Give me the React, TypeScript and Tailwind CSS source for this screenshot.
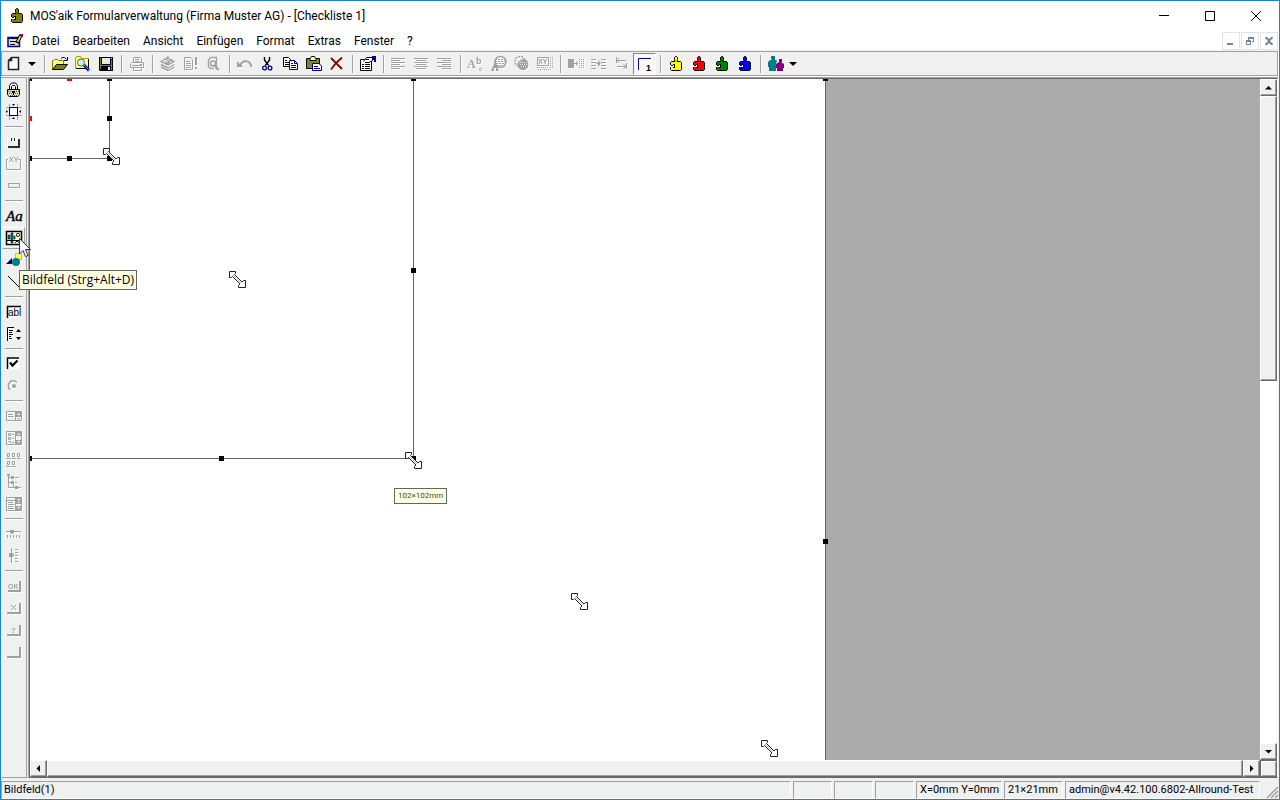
import type { ReactNode } from "react";

const GRAY = "#a0a0a0";

const puzzle = (fill: string) => (
  <>
    <path
      d="M6.5 1.5L7.5 .5H8.5L9.5 1.5V3.5L9 5.5H12.5L13.5 6.5V13.5L12.5 14.5H3.5L2.5 13.5V6.5L3.5 5.5H7L6.5 3.5Z"
      fill={fill}
      stroke="#000"
    />
    <path d="M2 9h3v-1h2v4H5v-1H2z" fill="#000" />
    <path d="M1 9h2v1h2v-1h1v2H1z" fill="#fff" />
  </>
);

const lines = (d: string) => <path d={d} stroke={GRAY} fill="none" />;

const icons: Record<string, ReactNode> = {
  page: <path d="M4.5 1.5H11.5V13.5H1.5V4.5ZM4.5 1.5V4.5H1.5" fill="#fff" stroke="#222" strokeWidth="1.5" />,
  open: (
    <>
      <path d="M.5 13V4.5H1.5L2.5 3.5H5.5L6.5 4.5H11.5V8" fill="#ffff80" stroke="#808000" />
      <path d="M.5 13.5L4.5 8.5H15.5L11.5 13.5Z" fill="#808000" stroke="#000" />
      <path d="M9 2.5L10.5 1.5H12.5L14.5 3.5M15.5 1V4.5H12" fill="none" stroke="#000" />
    </>
  ),
  preview: (
    <>
      <path d="M.5 2.5L1.5 .5H5.5L6.5 2.5H13.5V12.5H.5Z" fill="#ffff80" stroke="#a0a000" />
      <path d="M13.5 3V13M1 12.5H11" stroke="#000" />
      <circle cx="6" cy="6.5" r="3.5" fill="#c8f4ff" stroke="#606060" />
      <path d="M9 9L14 14.5" stroke="#000080" strokeWidth="3" />
      <path d="M9 9L14 14" stroke="#00d0ff" />
    </>
  ),
  save: (
    <>
      <path d="M1 1H15V15H2L1 14Z" fill="#000" />
      <path d="M2 2H3V9H13V4H14V14H13V10H3V13H2Z" fill="#808000" />
      <path d="M4 2H12V8H4ZM10 11H12V14H10Z" fill="#e8e8e8" />
      <path d="M13 2h1v1h-1z" fill="#fff" />
    </>
  ),
  print: (
    <>
      {lines("M4.5 6V1.5H11.5L12.5 2.5V6M6 3.5H10M6 5.5H10M2.5 6.5H14.5V11.5H1.5V7.5M4.5 11V14.5H12.5V11M3 9.5H13")}
      <path d="M11 8h2v1h-2zM3 11h10v1H3z" fill={GRAY} />
    </>
  ),
  layers: (
    <path
      d="M1 5.5L7 2L14 5.5L8 9ZM1 8.5L8 12L14.5 8.5M1 11L8 14.5L14.5 11M5 5.5L8 7.5L12 3M5 3L10 6M8 0V3"
      stroke={GRAY}
      strokeWidth="1.4"
      fill="none"
    />
  ),
  pageAlert: (
    <>
      {lines("M1.5 1.5H7.5L9.5 3.5V13.5H1.5ZM3 5.5H7M3 7.5H8M3 9.5H8M3 11.5H8")}
      <path d="M12 1h2v8h-2zM12 11h2v2h-2z" fill={GRAY} />
    </>
  ),
  pageFind: (
    <>
      <path d="M4.5 1.5H10.5V13.5M4.5 1.5L2.5 4.5V10.5L4.5 12.5H8" fill="none" stroke={GRAY} strokeWidth="1.5" />
      <circle cx="7" cy="7.5" r="2.5" fill="none" stroke={GRAY} strokeWidth="1.5" />
      <path d="M8.5 9.5L13 14" stroke={GRAY} strokeWidth="2" />
    </>
  ),
  undo: (
    <>
      <path d="M3 10C5 4 13 3 14.5 11" fill="none" stroke={GRAY} strokeWidth="2" />
      <path d="M0 5V11H6Z" fill={GRAY} />
    </>
  ),
  cut: (
    <>
      <path d="M4.5 1V4L8 9M9.5 1V4L6 9" fill="none" stroke="#000" strokeWidth="1.4" />
      <circle cx="4.5" cy="12" r="1.9" fill="none" stroke="#000080" strokeWidth="1.3" />
      <circle cx="10" cy="12" r="1.9" fill="none" stroke="#000080" strokeWidth="1.3" />
      <path d="M6 8L5 10M8 8L9 10" stroke="#000080" />
    </>
  ),
  copy: (
    <>
      <path d="M.5 1.5H5.5L7.5 3.5V10.5H.5Z" fill="#fff" stroke="#000" />
      <path d="M2 4.5H4M2 6.5H6M2 8.5H6" stroke="#000" />
      <path d="M6.5 4.5H11.5L14.5 7.5V13.5H6.5Z" fill="#fff" stroke="#000080" />
      <path d="M8 7.5H10M8 9.5H13M8 11.5H13M11.5 5V7.5H14" stroke="#000080" fill="none" />
    </>
  ),
  paste: (
    <>
      <path d="M.5 2.5H13.5V12.5H.5Z" fill="#808040" stroke="#000" />
      <path d="M4 2.5L5.5 .5H8.5L10 2.5V4.5H4Z" fill="#ffff80" stroke="#000" />
      <path d="M6.5 7.5H13L15.5 10V14.5H6.5Z" fill="#fff" stroke="#000080" />
      <path d="M8 10.5H12M8 12.5H14" stroke="#000080" />
    </>
  ),
  remove: <path d="M2 2L13 13M13 1.5L7 7L2 13.5" stroke="#800000" strokeWidth="1.8" fill="none" />,
  props: (
    <>
      <path d="M.5 3.5H11.5V14.5H.5Z" fill="#fff" stroke="#000" />
      <path d="M2 8.5H4M5 8.5H10M2 10.5H4M5 10.5H10M2 12.5H4M5 12.5H10" stroke="#000" />
      <path d="M3.5 5.5L6.5 1.5H12.5V4.5L9 6.5H5" fill="#fff" stroke="#000" />
      <path d="M6 3.5H9" stroke="#000" />
      <path d="M12 0H16V6H14V4H12Z" fill="#000080" />
    </>
  ),
  left: lines("M0 2.5H14M0 4.5H9M0 6.5H14M0 8.5H9M0 10.5H14M0 12.5H9"),
  center: lines("M0 2.5H14M2 4.5H12M0 6.5H14M2 8.5H12M0 10.5H14M2 12.5H12"),
  right: lines("M0 2.5H14M5 4.5H14M0 6.5H14M5 8.5H14M0 10.5H14M5 12.5H14"),
  font: (
    <>
      <text x="-1" y="12" fontFamily="Liberation Serif" fontWeight="bold" fontSize="12" fill={GRAY}>
        A
      </text>
      <text x="8" y="8" fontFamily="Liberation Sans" fontWeight="bold" fontSize="9" fill={GRAY}>
        b
      </text>
      <text x="11" y="15" fontFamily="Liberation Sans" fontWeight="bold" fontSize="6" fill={GRAY}>
        c
      </text>
    </>
  ),
  fontColor: (
    <>
      <circle cx="9.5" cy="6" r="5.5" fill="none" stroke={GRAY} strokeWidth="1.5" />
      <path d="M4 3.5H15M4 5.5H15M5 7.5H15M6 9.5H14" stroke={GRAY} strokeDasharray="2 1" />
      <path d="M0 15L4 6L8 15H5V12H3V15Z" fill={GRAY} />
    </>
  ),
  fillColor: (
    <>
      <circle cx="6" cy="5.5" r="5" fill="none" stroke={GRAY} strokeWidth="1.5" strokeDasharray="2 1" />
      <circle cx="9" cy="8.5" r="5.5" fill={GRAY} />
      <path d="M6 6.5H13M6 8.5H14M7 10.5H13M3 4.5H8M3 6.5H6" stroke="#e8e8e8" strokeDasharray="1 1" />
    </>
  ),
  frame: (
    <>
      {lines("M.5 1.5H11.5V9.5H.5Z")}
      <path d="M13.5 1V13.5H0M15.5 1V13M0 11.5H12" stroke={GRAY} fill="none" strokeDasharray="1 1" />
      <text x="1" y="8" fontFamily="Liberation Sans" fontWeight="bold" fontSize="7" fill={GRAY}>
        XY
      </text>
    </>
  ),
  toRight: (
    <>
      <path d="M0 3H6V12H0ZM8 5L10 7.5L8 10ZM6 7H9V8H6Z" fill={GRAY} />
      <path d="M11.5 3V12M13.5 3V12M15.5 3V12" stroke={GRAY} strokeDasharray="1 1" />
    </>
  ),
  between: (
    <>
      {lines("M0 3.5H5M0 6.5H5M0 9.5H5M0 12.5H5M10 3.5H15M10 6.5H15M10 9.5H15M10 12.5H15M5 7.5H8")}
      <path d="M7 4L10 7.5L7 11Z" fill={GRAY} />
    </>
  ),
  tabOrder: lines("M2.5 1V7M3 4.5H12M5.5 2L3 4.5L5.5 7M12.5 7V13M3 10.5H12M9.5 8L12 10.5L9.5 13"),
  corner: (
    <>
      <path d="M1.5 14V2.5H14" stroke="#000080" fill="none" />
      <text x="9" y="15" fontFamily="Liberation Sans" fontWeight="bold" fontSize="9" fill="#000">
        1
      </text>
    </>
  ),
  yellow: puzzle("#ffff00"),
  red: puzzle("#ff0000"),
  green: puzzle("#008000"),
  blue: puzzle("#0000ff"),
  olive: puzzle("#808000"),
  people: (
    <>
      <path d="M3 0H7V4H9L8 8V15H1V11H0V6L2 4H4L3 3Z" fill="#008080" />
      <path d="M11 3H14V6H13L16 8V12H15V15H9V12H8V8L11 6Z" fill="#800080" />
    </>
  ),
  lock: (
    <>
      <path d="M3.5 7V3.5L5.5 1H9.5L11.5 3.5V7" fill="none" stroke="#000" />
      <path d="M5.5 7V4.5L6.5 3.5H8.5L9.5 4.5V7" fill="none" stroke="#000" />
      <path d="M1.5 7.5H13.5V12.5L12 14.5H3L1.5 12.5Z" fill="#d8d8b8" stroke="#000" />
      <path d="M2 9.5H13M3 11.5H13M2 13.5H13" stroke="#606040" strokeDasharray="1 1" />
      <path d="M6 9h3v2H8v2H7v-2H6z" fill="#000" />
    </>
  ),
  snap: (
    <>
      <path d="M3.5 0V16M11.5 0V16M0 3.5H16M0 11.5H16" stroke="#a0a0a0" />
      <path d="M3.5 3.5H11.5V11.5H3.5Z" fill="#fff" stroke="#000" />
      <path d="M6 0H9L7.5 2ZM6 15H9L7.5 13ZM0 6V9L2 7.5ZM15 6V9L13 7.5Z" fill="#000080" />
    </>
  ),
  raised: (
    <>
      <path d="M1 4H5V6H8V4H12V13H1Z" fill="#fff" />
      <path d="M5 4H6V7H5ZM8 4H9V7H8Z" fill="#202020" />
      <path d="M2 12H12V5H14V14H2Z" fill="#303030" />
      <path d="M2 7H12V12H2Z" fill="#f0f0f0" />
    </>
  ),
  group: (
    <>
      {lines("M2 3.5H.5V13.5H14.5V3.5H12")}
      <text x="3" y="6" fontFamily="Liberation Sans" fontSize="7" fill="#808080">
        XY
      </text>
    </>
  ),
  bar: <path d="M2.5 5.5H13.5V9.5H2.5Z" fill="#f0f0f0" stroke={GRAY} />,
  label: (
    <text
      x="0"
      y="13"
      fontFamily="Liberation Serif"
      fontStyle="italic"
      fontSize="15"
      fill="#000"
      stroke="#000"
      strokeWidth=".4"
    >
      Aa
    </text>
  ),
  image: (
    <>
      <path d="M.5 1.5H15.5V14.5H.5Z" fill="#fff" stroke="#000" strokeWidth="1.5" />
      <path d="M5 3H7V13H5ZM2 5H4V9H2ZM8 6H9V9H8Z" fill="#008080" stroke="#000" strokeWidth=".6" />
      <path d="M1 10.5H15M9 13L11 11L14 13" fill="none" stroke="#000" />
      <circle cx="12" cy="5" r="1.7" fill="#ff0" stroke="#000" strokeWidth=".8" />
    </>
  ),
  shapes: (
    <>
      <path d="M9.5 1.5H15.5V7.5H9.5Z" fill="#ffff60" stroke="#e0c000" />
      <path d="M0 12L6 6V12Z" fill="#000080" />
      <circle cx="10" cy="10" r="4" fill="#008080" />
    </>
  ),
  line: <path d="M2 2L13 13" stroke="#000" />,
  textbox: (
    <>
      <path d="M1 2H15V14H1Z" fill="#fff" />
      <path d="M1.5 14V2.5H15" stroke="#000" strokeWidth="1.5" fill="none" />
      <text x="2" y="12" fontFamily="Liberation Sans" fontSize="10" fill="#000">
        abl
      </text>
    </>
  ),
  spin: (
    <>
      <path d="M1 1H8V15H1Z" fill="#fff" />
      <path d="M1.5 15V1.5H8M3 4.5H7M3 6.5H6M3 8.5H7M3 10.5H5M3 12.5H6" stroke="#000" fill="none" />
      <path d="M10 6L12.5 3L15 6ZM10 11L12.5 14L15 11Z" fill="#000" />
    </>
  ),
  check: (
    <>
      <path d="M2 2H13V13H2Z" fill="#fff" />
      <path d="M1.5 13V2H13" stroke="#000" strokeWidth="1.5" fill="none" />
      <path d="M4 6.5L6.5 9.5L11.5 4.5" stroke="#000" strokeWidth="2.2" fill="none" />
    </>
  ),
  radio: (
    <>
      <path d="M4 12L2.5 9.5V6L5 3H9L11 4.5" stroke={GRAY} strokeWidth="1.5" fill="none" />
      <circle cx="8" cy="8" r="2" fill={GRAY} />
    </>
  ),
  combo: (
    <>
      {lines("M.5 3.5H15.5V12.5H.5ZM9.5 4V12M2 6.5H7M2 8.5H8M10 8.5H15")}
      <path d="M10 4H15V8H10ZM11 10h3l-1 2z" fill={GRAY} />
      <path d="M11 7h3l-1-2z" fill="#fff" />
    </>
  ),
  list: (
    <>
      {lines(
        "M.5 1.5H15.5V14.5H.5ZM9.5 2V14M2.5 3.5H4.5V5.5H2.5ZM2.5 7.5H4.5V9.5H2.5ZM2.5 11.5H4.5V13.5M6 4.5H8M6 8.5H8M6 12.5H8",
      )}
      <path d="M10 2H15V6H10ZM10 10H15V14H10Z" fill={GRAY} />
      <path d="M11 5h3l-1-2zM11 11h3l-1 2z" fill="#fff" />
    </>
  ),
  iconsView: lines(
    "M1.5 1.5H3.5V4.5H1.5ZM6.5 1.5H8.5V4.5H6.5ZM11.5 1.5H13.5V4.5H11.5ZM0 6.5H5M6 6.5H10M11 6.5H15M1.5 9.5H3.5V12.5H1.5ZM6.5 9.5H8.5V12.5H6.5ZM0 14.5H5M6 14.5H10",
  ),
  tree: (
    <>
      {lines("M2.5 0V13.5H7M3 3.5H6M3 8.5H6M9 3.5H13M9 8.5H11M7.5 9V13.5H9M12 13.5H15")}
      <path d="M5 2h3v3H5zM5 7h3v3H5zM9 12h3v3H9zM1 0h3v2H1z" fill={GRAY} />
    </>
  ),
  table: (
    <>
      {lines("M.5 1.5H15.5V14.5H.5ZM0 4.5H15M9.5 1V14M2 6.5H7M2 8.5H8M2 10.5H7M2 12.5H8")}
      <path d="M10 2H15V8H10ZM10 10H15V14H10Z" fill={GRAY} />
      <path d="M11 3h3l-1 2zM11 7h3l-1-1zM11 11h3l-1 2z" fill="#fff" />
    </>
  ),
  sliderH: (
    <>
      {lines("M0 5.5H15M1.5 9V12M4.5 9V12M7.5 9V12M10.5 9V12M13.5 9V12")}
      <path d="M4 4H8V7L6 8L4 7Z" fill={GRAY} />
    </>
  ),
  sliderV: (
    <>
      {lines("M5.5 0V15M9 1.5H12M9 4.5H12M9 7.5H12M9 10.5H12M9 13.5H12")}
      <path d="M3 5H7L8 7L7 9H3Z" fill={GRAY} />
    </>
  ),
  ok: (
    <>
      <path d="M2 13H14V3" stroke={GRAY} strokeWidth="2" fill="none" />
      <text x="2" y="11" fontFamily="Liberation Sans" fontWeight="bold" fontSize="7" fill={GRAY}>
        OK
      </text>
    </>
  ),
  cancel: (
    <>
      <path d="M1 13H14V3" stroke={GRAY} strokeWidth="2" fill="none" />
      {lines("M5 5L10 10M10 5L5 10")}
    </>
  ),
  help: (
    <>
      <path d="M1 13H14V3" stroke={GRAY} strokeWidth="2" fill="none" />
      <text x="5" y="11" fontFamily="Liberation Sans" fontWeight="bold" fontSize="8" fill={GRAY}>
        ?
      </text>
    </>
  ),
  blank: <path d="M1 13H14V3" stroke={GRAY} strokeWidth="2" fill="none" />,
};

type Tool = { icon: string; label: string; state?: "off" | "on" | "hover" };

const off = (icon: string, label: string): Tool => ({ icon, label, state: "off" });

const toolbar: Tool[][] = [
  [
    { icon: "open", label: "Öffnen" },
    { icon: "preview", label: "Seitenansicht" },
    { icon: "save", label: "Speichern" },
  ],
  [off("print", "Drucken")],
  [off("layers", "Stapel"), off("pageAlert", "Prüfen"), off("pageFind", "Suchen")],
  [
    off("undo", "Rückgängig"),
    { icon: "cut", label: "Ausschneiden" },
    { icon: "copy", label: "Kopieren" },
    { icon: "paste", label: "Einfügen" },
    { icon: "remove", label: "Löschen" },
  ],
  [{ icon: "props", label: "Eigenschaften" }],
  [off("left", "Linksbündig"), off("center", "Zentriert"), off("right", "Rechtsbündig")],
  [
    off("font", "Schriftart"),
    off("fontColor", "Schriftfarbe"),
    off("fillColor", "Füllfarbe"),
    off("frame", "Rahmen"),
  ],
  [
    off("toRight", "Verschieben"),
    off("between", "Verteilen"),
    off("tabOrder", "Reihenfolge"),
    { icon: "corner", label: "Ebene 1", state: "on" },
  ],
  [
    { icon: "yellow", label: "Baustein gelb" },
    { icon: "red", label: "Baustein rot" },
    { icon: "green", label: "Baustein grün" },
    { icon: "blue", label: "Baustein blau" },
  ],
];

const rail: Tool[][] = [
  [
    { icon: "lock", label: "Sperren" },
    { icon: "snap", label: "Raster" },
  ],
  [{ icon: "raised", label: "Register" }, off("group", "Gruppe"), off("bar", "Leiste")],
  [
    { icon: "label", label: "Textfeld" },
    { icon: "image", label: "Bildfeld", state: "hover" },
    { icon: "shapes", label: "Form" },
    { icon: "line", label: "Linie" },
  ],
  [
    { icon: "textbox", label: "Eingabefeld" },
    { icon: "spin", label: "Drehfeld" },
  ],
  [{ icon: "check", label: "Kontrollkästchen" }, off("radio", "Optionsfeld")],
  [
    off("combo", "Kombinationsfeld"),
    off("list", "Listenfeld"),
    off("iconsView", "Symbolansicht"),
    off("tree", "Baumansicht"),
    off("table", "Tabelle"),
  ],
  [off("sliderH", "Schieber waagerecht"), off("sliderV", "Schieber senkrecht")],
  [off("ok", "OK"), off("cancel", "Abbrechen"), off("help", "Hilfe"), off("blank", "Schaltfläche")],
];

const stateClass = {
  off: "border-transparent",
  on: "border-t-[#808080] border-l-[#808080] border-r-white border-b-white bg-[#f8f8f8]",
  hover: "border-t-white border-l-white border-r-[#a0a0a0] border-b-[#a0a0a0]",
};

const Icon = ({ name, disabled = false }: { name: string; disabled?: boolean }) => (
  <svg
    viewBox="0 0 16 16"
    aria-hidden="true"
    className={`size-4 shrink-0 overflow-visible ${disabled ? "drop-shadow-[1px_1px_0_#fff]" : ""}`}
  >
    {icons[name]}
  </svg>
);

const ToolButton = ({ icon, label, state }: Tool) => (
  <button
    type="button"
    aria-label={label}
    disabled={state === "off"}
    className={`flex h-[22px] w-[23px] shrink-0 border pl-[3px] pt-0.5 ${stateClass[state ?? "off"]}`}
  >
    <Icon name={icon} disabled={state === "off"} />
  </button>
);

const BarDivider = () => (
  <div className="w-2 shrink-0 py-0.5 pl-1">
    <div className="h-full w-0.5 border-l border-[#a0a0a0] bg-white" />
  </div>
);

const DropArrow = () => (
  <button type="button" aria-label="Auswahl öffnen" className="flex w-3.5 items-center pl-0.5">
    <svg viewBox="0 0 8 4" className="h-1 w-2" aria-hidden="true">
      <path d="M0 0H8L4 4Z" />
    </svg>
  </button>
);

const captionControls = [
  { label: "Minimieren", d: "M0 4.5H10" },
  { label: "Maximieren", d: "M.5.5H9.5V9.5H.5Z" },
  { label: "Schließen", d: "M0 0L10 10M10 0L0 10" },
];

const TitleBar = () => (
  <header className="flex h-[30px] shrink-0 items-center pl-2">
    <Icon name="olive" />
    <h1 className="flex-1 pl-[5px] text-[12px]">MOS'aik Formularverwaltung (Firma Muster AG) - [Checkliste 1]</h1>
    {captionControls.map(({ label, d }) => (
      <button
        key={label}
        type="button"
        aria-label={label}
        className="flex h-full w-[46px] items-center justify-center"
      >
        <svg viewBox="0 0 10 10" className="size-2.5" aria-hidden="true">
          <path d={d} fill="none" stroke="#000" />
        </svg>
      </button>
    ))}
  </header>
);

const menus = ["Datei", "Bearbeiten", "Ansicht", "Einfügen", "Format", "Extras", "Fenster", "?"];

const childControls = [
  { label: "Formular minimieren", d: "M4 10H10V12H4Z" },
  { label: "Formular wiederherstellen", d: "M6 4H12V9H10V8H11V6H7V7H6ZM4 7H9V12H4ZM5 9V11H8V9Z" },
  { label: "Formular schließen", d: "M4 4H6L8 6L10 4H12V5L9 8L12 11V12H10L8 10L6 12H4V11L7 8L4 5Z" },
];

const MenuBar = () => (
  <nav className="flex h-5 shrink-0 items-center border-b border-[#f0f0f0] pl-1.5">
    <svg viewBox="0 0 16 14" className="h-3.5 w-4" aria-hidden="true">
      <path d="M1 3.5H12.5V12.5H1Z" fill="#d8d8d8" stroke="#000080" strokeWidth="1.5" />
      <path d="M1 3H12V5H1Z" fill="#000080" />
      <path d="M3 7.5H9M3 10.5H8" stroke="#000" />
      <path d="M10 9L14 1" stroke="#000" strokeWidth="3.5" />
      <path d="M10.5 8L13.5 2" stroke="#ff0" strokeWidth="1.5" />
      <path d="M13 0h3v3h-2z" fill="#800080" />
    </svg>
    <div className="flex flex-1 pl-0.5 text-[12px]">
      {menus.map((name) => (
        <button key={name} type="button" className="pl-[7px] pr-1.5 leading-5">
          {name}
        </button>
      ))}
    </div>
    <div className="flex gap-px pr-px">
      {childControls.map(({ label, d }) => (
        <button key={label} type="button" aria-label={label} className="size-[18px] border border-[#e3e3e3]">
          <svg viewBox="0 0 16 16" className="size-4" aria-hidden="true">
            <path d={d} fill="#75869a" fillRule="evenodd" />
          </svg>
        </button>
      ))}
    </div>
  </nav>
);

const Toolbar = () => (
  <div className="mb-px mr-px flex h-[25px] shrink-0 overflow-hidden border border-[#a0a0a0] bg-[#f0f0f0] pl-px pt-px">
    <ToolButton icon="page" label="Neu" />
    <DropArrow />
    {toolbar.map((group) => (
      <div key={group[0].icon} className="flex">
        <BarDivider />
        {group.map((tool) => (
          <ToolButton key={tool.icon} {...tool} />
        ))}
      </div>
    ))}
    <BarDivider />
    <ToolButton icon="people" label="Benutzer" />
    <DropArrow />
  </div>
);

const ToolRail = () => (
  <aside className="mr-px flex w-[26px] shrink-0 flex-col overflow-hidden border border-[#a0a0a0] border-l-white pt-px">
    {rail.map((group, i) => (
      <div key={group[0].icon}>
        {i > 0 && (
          <div className="h-2 px-[3px] pt-[3px]">
            <div className="h-0.5 border-t border-[#a0a0a0] bg-white" />
          </div>
        )}
        {group.map((tool) => (
          <ToolButton key={tool.icon} {...tool} />
        ))}
      </div>
    ))}
  </aside>
);

const bevel =
  "border border-t-white border-l-white border-r-[#696969] border-b-[#696969] bg-[#f0f0f0] shadow-[inset_-1px_-1px_0_#a0a0a0]";

const ScrollArrow = ({ label, d }: { label: string; d: string }) => (
  <button
    type="button"
    aria-label={label}
    className={`flex size-[17px] shrink-0 items-center justify-center ${bevel}`}
  >
    <svg viewBox="0 0 7 7" className="size-[7px]" aria-hidden="true">
      <path d={d} />
    </svg>
  </button>
);

// Selection handles, relative to the visible corner of the form.
const handles = [
  { x: 0, y: 0 },
  { x: 79, y: 0 },
  { x: 79, y: 39 },
  { x: 0, y: 79 },
  { x: 39, y: 79 },
  { x: 79, y: 79 },
  { x: 39, y: 0, red: true },
  { x: 0, y: 39, red: true },
  { x: 383, y: 0 },
  { x: 383, y: 191 },
  { x: 0, y: 379 },
  { x: 191, y: 379 },
  { x: 383, y: 379 },
  { x: 795, y: 0 },
  { x: 795, y: 462 },
];

const resizeMarks = [
  { x: 73, y: 69 },
  { x: 199, y: 192 },
  { x: 375, y: 373 },
  { x: 541, y: 514 },
  { x: 731, y: 661 },
];

const ResizeMark = ({ x, y }: { x: number; y: number }) => (
  <svg viewBox="0 0 17 17" className="absolute size-[17px]" style={{ left: x, top: y }} aria-hidden="true">
    <path
      d="M.5.5H6.5V2.5L5.5 3.5L13 11L14.5 9.5H16.5V16.5H9.5V14.5L11 13L3.5 5.5L2.5 6.5H.5Z"
      fill="#fff"
      stroke="#222"
    />
    <path d="M4 4L12 12" stroke="#bbb" />
  </svg>
);

const FormCanvas = () => (
  <main className="relative flex-1 overflow-hidden bg-[#ababab]">
    <div className="absolute left-0 top-0 h-full w-[796px] border-r border-[#646464] bg-white" />
    <div className="absolute left-0 top-0 h-[380px] w-96 border-b border-r border-[#646464]" />
    <div className="absolute left-0 top-0 size-20 border-b border-r border-[#646464]" />
    {handles.map(({ x, y, red }) => (
      <span
        key={`${x}-${y}`}
        className={`absolute size-[5px] ${red ? "bg-[#f00]" : "bg-black"}`}
        style={{ left: x === 0 ? -3 : x - 2, top: y === 0 ? -3 : y - 2 }}
      />
    ))}
    {resizeMarks.map((mark) => (
      <ResizeMark key={mark.x} {...mark} />
    ))}
    <span className="absolute left-[364px] top-[409px] h-4 border border-[#646464] bg-[#ffffe1] px-[3px] text-[8px] leading-[14px] text-[#444]">
      102×102mm
    </span>
  </main>
);

const Workspace = () => (
  <div className="mr-px flex min-w-0 flex-1 border-l border-t border-[#a0a0a0]">
    <div className="flex min-w-0 flex-1 flex-col border border-b-[#696969] border-l-[#696969] border-r-white border-t-[#696969]">
      <div className="flex min-h-0 flex-1">
        <FormCanvas />
        <div className="flex w-[17px] shrink-0 flex-col bg-white">
          <ScrollArrow label="Nach oben" d="M0 5.5L3.5 2L7 5.5Z" />
          <div className="min-h-0 flex-1">
            <div className={`h-[44%] ${bevel}`} />
          </div>
          <ScrollArrow label="Nach unten" d="M0 2L3.5 5.5L7 2Z" />
        </div>
      </div>
      <div className="flex h-[17px] shrink-0">
        <ScrollArrow label="Nach links" d="M5 0L1.5 3.5L5 7Z" />
        <div className={`flex-1 ${bevel}`} />
        <ScrollArrow label="Nach rechts" d="M2 0L5.5 3.5L2 7Z" />
        <div className="size-[17px] border border-[#696969] bg-[#f0f0f0] shadow-[inset_1px_1px_0_#fff,inset_-1px_-1px_0_#a0a0a0]" />
      </div>
    </div>
  </div>
);

const panel =
  "h-[18px] shrink-0 overflow-hidden whitespace-nowrap border border-b-white border-l-[#a0a0a0] border-r-white border-t-[#a0a0a0] leading-4";

const StatusBar = () => (
  <footer className="flex h-[21px] shrink-0 gap-0.5 bg-[#f0f0f0] pt-[3px] text-[11px]">
    <div className={`flex-1 px-0.5 ${panel}`}>Bildfeld(1)</div>
    <div className={`w-[39px] ${panel}`} />
    <div className={`w-[39px] ${panel}`} />
    <div className={`w-[39px] ${panel}`} />
    <div className={`w-[86px] px-[3px] ${panel}`}>X=0mm Y=0mm</div>
    <div className={`w-[59px] px-[3px] ${panel}`}>21×21mm</div>
    <div className={`w-[195px] px-[3px] ${panel}`}>admin@v4.42.100.6802-Allround-Test</div>
    <svg viewBox="0 0 17 18" className="h-[18px] w-[17px] shrink-0" aria-hidden="true">
      <path d="M5 17L16 6M9 17L16 10M13 17L16 14" stroke="#a0a0a0" strokeWidth="1.5" />
    </svg>
  </footer>
);

const App = () => {
  return (
    <div className="relative flex h-screen flex-col overflow-hidden border border-[#1883d7] bg-white font-['Roboto','Noto_Sans',sans-serif] text-black">
      <TitleBar />
      <MenuBar />
      <Toolbar />
      <div className="flex min-h-0 flex-1 bg-[#f0f0f0]">
        <ToolRail />
        <Workspace />
      </div>
      <StatusBar />
      <svg viewBox="0 0 12 19" className="absolute left-[18px] top-[237px] h-[19px] w-3" aria-hidden="true">
        <path d="M.5.5V16L4 12.5L6.5 18.5L9 17.5L6.5 11.5H11.5Z" fill="#fff" stroke="#333" />
      </svg>
      <div
        role="tooltip"
        className="absolute left-[18px] top-[269px] h-5 border border-[#646464] bg-[#ffffe1] px-0.5 font-['Open_Sans','Noto_Sans',sans-serif] text-[12px] leading-[18px]"
      >
        Bildfeld (Strg+Alt+D)
      </div>
    </div>
  );
};

export default App;
